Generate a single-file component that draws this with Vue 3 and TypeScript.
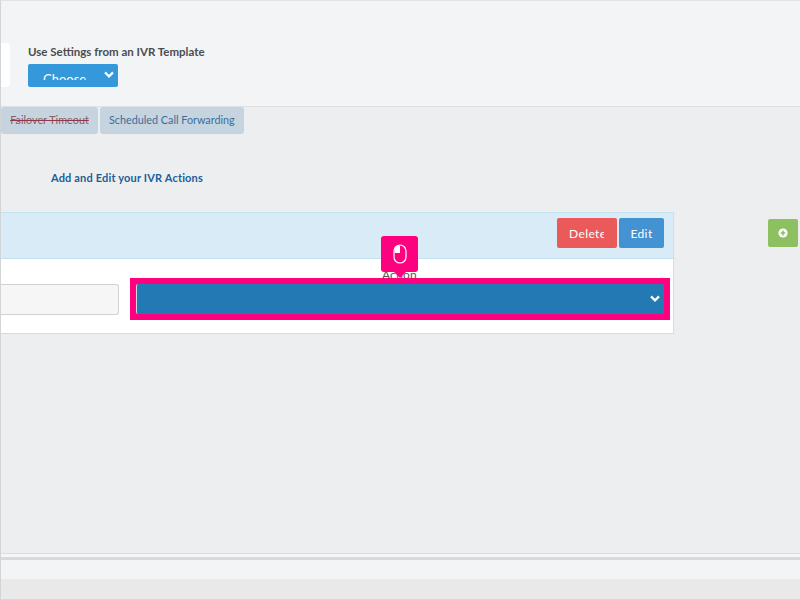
<script setup lang="ts">
const tabs: { label: string; off?: boolean }[] = [
  { label: 'Failover Timeout', off: true },
  { label: 'Scheduled Call Forwarding' },
]
</script>

<template>
  <div class="page">
    <header class="head">
      <div class="stub"></div>
      <div class="tpl">
        <div class="tpl-label">Use Settings from an IVR Template</div>
        <div class="choose">
          <span class="choose-text">Choose</span>
          <svg class="chev" width="10" height="8" viewBox="0 0 10 8"><path d="M1 1.4 5 5.4l4-4" fill="none" stroke="#fff" stroke-width="2.2"/></svg>
        </div>
      </div>
    </header>
    <main class="main">
      <nav class="tabs">
        <span v-for="t in tabs" :key="t.label" class="tab" :class="{ off: t.off }">{{ t.label }}</span>
      </nav>
      <h2 class="title"><span>Add and Edit your IVR Actions</span></h2>
      <div class="row">
        <section class="panel">
          <div class="panel-head">
            <button class="btn del"><span>Delete</span></button>
            <button class="btn edit">Edit</button>
          </div>
          <div class="panel-body">
            <div class="input"></div>
            <div class="field">
              <div class="action-label">Action</div>
              <div class="hl">
                <div class="select">
                  <svg width="10" height="8" viewBox="0 0 10 8"><path d="M1 1.4 5 5.4l4-4" fill="none" stroke="#fff" stroke-width="2.2"/></svg>
                </div>
              </div>
              <div class="tip">
                <svg width="14" height="20" viewBox="0 0 14 20"><rect x="1" y="1" width="12" height="18" rx="6" fill="none" stroke="#fff" stroke-width="1.2"/><path d="M7 1.5v7.5H1.6V7A5.4 5.4 0 0 1 7 1.5Z" fill="#fff"/></svg>
              </div>
            </div>
          </div>
        </section>
        <button class="add">
          <svg width="10" height="10" viewBox="0 0 10 10"><circle cx="5" cy="5" r="4.6" fill="#fff"/><path d="M5 2.6v4.8M2.6 5h4.8" stroke="#8cc061" stroke-width="1.5"/></svg>
        </button>
      </div>
    </main>
    <footer class="foot">
      <div class="foot-a"></div>
      <div class="foot-b"></div>
      <div class="foot-c"></div>
      <div class="foot-d"></div>
    </footer>
  </div>
</template>

<style>
html, body { margin: 0; background: #edeef0; }
</style>

<style scoped>
.page {
  width: 800px;
  height: 600px;
  box-sizing: border-box;
  border-left: 1px solid #d2d4d6;
  border-top: 1px solid #e2e3e5;
  overflow: hidden;
  display: flex;
  flex-direction: column;
  font-family: Lato, "Liberation Sans", sans-serif;
  background: #edeef0;
}
.head {
  height: 106px;
  box-sizing: border-box;
  flex: none;
  background: #f3f4f6;
  border-bottom: 1px solid #dfe0e2;
  display: flex;
  padding: 42px 0 0 0;
}
.stub {
  width: 9px;
  height: 44px;
  background: #fff;
  border-radius: 0 4px 4px 0;
}
.tpl { margin-left: 18px; }
.tpl-label {
  font-size: 11.5px;
  line-height: 18px;
  font-weight: 700;
  color: #4a4d50;
}
.choose {
  margin-top: 3px;
  width: 90px;
  height: 23px;
  background: #3498db;
  border-radius: 2px;
  color: #fff;
  font-size: 13px;
  display: flex;
  justify-content: space-between;
  align-items: flex-start;
}
.choose-text { margin: 6px 0 0 15px; height: 10px; line-height: 18px; overflow: hidden; }
.chev { margin: 7px 4px 0 0; }
.main { flex: 1; min-height: 0; display: flex; flex-direction: column; }
.tabs { display: flex; gap: 2px; height: 27px; }
.tab {
  background: #c5d4df;
  color: #3c6d99;
  font-size: 10.8px;
  line-height: 26px;
  padding: 0 9px;
  border-radius: 3px;
}
.tab.off {
  width: 97px;
  box-sizing: border-box;
  padding: 0;
  text-align: center;
  color: #8d5a68;
  text-decoration: line-through;
  text-decoration-color: #8c3b48;
}
.title {
  margin: 36px 0 0 50px;
  height: 16px;
  font-size: 11px;
  line-height: 16px;
  font-weight: 700;
  color: #1a5f99;
}
.title span { display: block; width: 152px; overflow: hidden; white-space: nowrap; letter-spacing: 0.17px; }
.row { margin-top: 26px; display: flex; align-items: flex-start; }
.panel {
  width: 673px;
  box-sizing: border-box;
  height: 122px;
  background: #fff;
  border: 1px solid #c2e2f0;
  border-left: 0;
}
.panel-head {
  height: 46px;
  box-sizing: border-box;
  background: #d9ebf7;
  border-bottom: 1px solid #c2e2f0;
  display: flex;
  justify-content: flex-end;
  align-items: flex-start;
  gap: 2px;
  padding: 5px 9px 0 0;
}
.btn {
  height: 30px;
  border: 0;
  border-radius: 2px;
  color: #fff;
  font: 12px/31px Lato, "Liberation Sans", sans-serif;
  letter-spacing: 0.4px;
  padding: 0;
}
.del { width: 60px; background: #ea5a5a; }
.del span { display: block; width: 35px; margin-left: 12px; overflow: hidden; white-space: nowrap; }
.edit { width: 45px; background: #4392d2; }
.panel-body { display: flex; padding: 25px 0 0 0; }
.input {
  width: 118px;
  height: 31px;
  box-sizing: border-box;
  background: #f6f6f6;
  border: 1px solid #d2d2d2;
  border-left: 0;
  border-radius: 0 3px 3px 0;
}
.field { position: relative; margin-left: 11px; }
.action-label {
  position: absolute;
  left: 252px;
  top: -16px;
  font-size: 12px;
  line-height: 14px;
  color: #555;
  z-index: 1;
}
.hl {
  position: relative;
  z-index: 2;
  margin-top: -6px;
  width: 540px;
  height: 42px;
  box-sizing: border-box;
  padding: 6px;
  background: #ff007f;
}
.select {
  height: 30px;
  background: #2279b3;
  border-left: 1px solid #cfd6dc;
  border-radius: 2px;
  display: flex;
  align-items: center;
  justify-content: flex-end;
  padding-right: 4px;
  box-sizing: border-box;
}
.tip {
  position: absolute;
  z-index: 3;
  left: 251px;
  top: -48px;
  width: 37px;
  height: 36px;
  background: #ff007f;
  border-radius: 3px;
  display: flex;
  align-items: center;
  justify-content: center;
}
.tip::after {
  content: "";
  position: absolute;
  left: 13px;
  bottom: -6px;
  border: 6px solid transparent;
  border-bottom: 0;
  border-top-color: #ff007f;
}
.add {
  margin: 7px 0 0 94px;
  width: 30px;
  height: 28px;
  border: 0;
  padding: 0;
  border-radius: 2px;
  background: #8cc061;
  display: flex;
  align-items: center;
  justify-content: center;
}
.foot { flex: none; display: flex; flex-direction: column; }
.foot-a { height: 4px; background: #f6f6f7; border-top: 1px solid #dcdddf; box-sizing: border-box; }
.foot-b { height: 3px; background: #d9dadb; }
.foot-c { height: 19px; background: #f3f4f6; }
.foot-d { height: 21px; background: #e9e9e9; border-bottom: 1px solid #d8d8d8; box-sizing: border-box; }
</style>
